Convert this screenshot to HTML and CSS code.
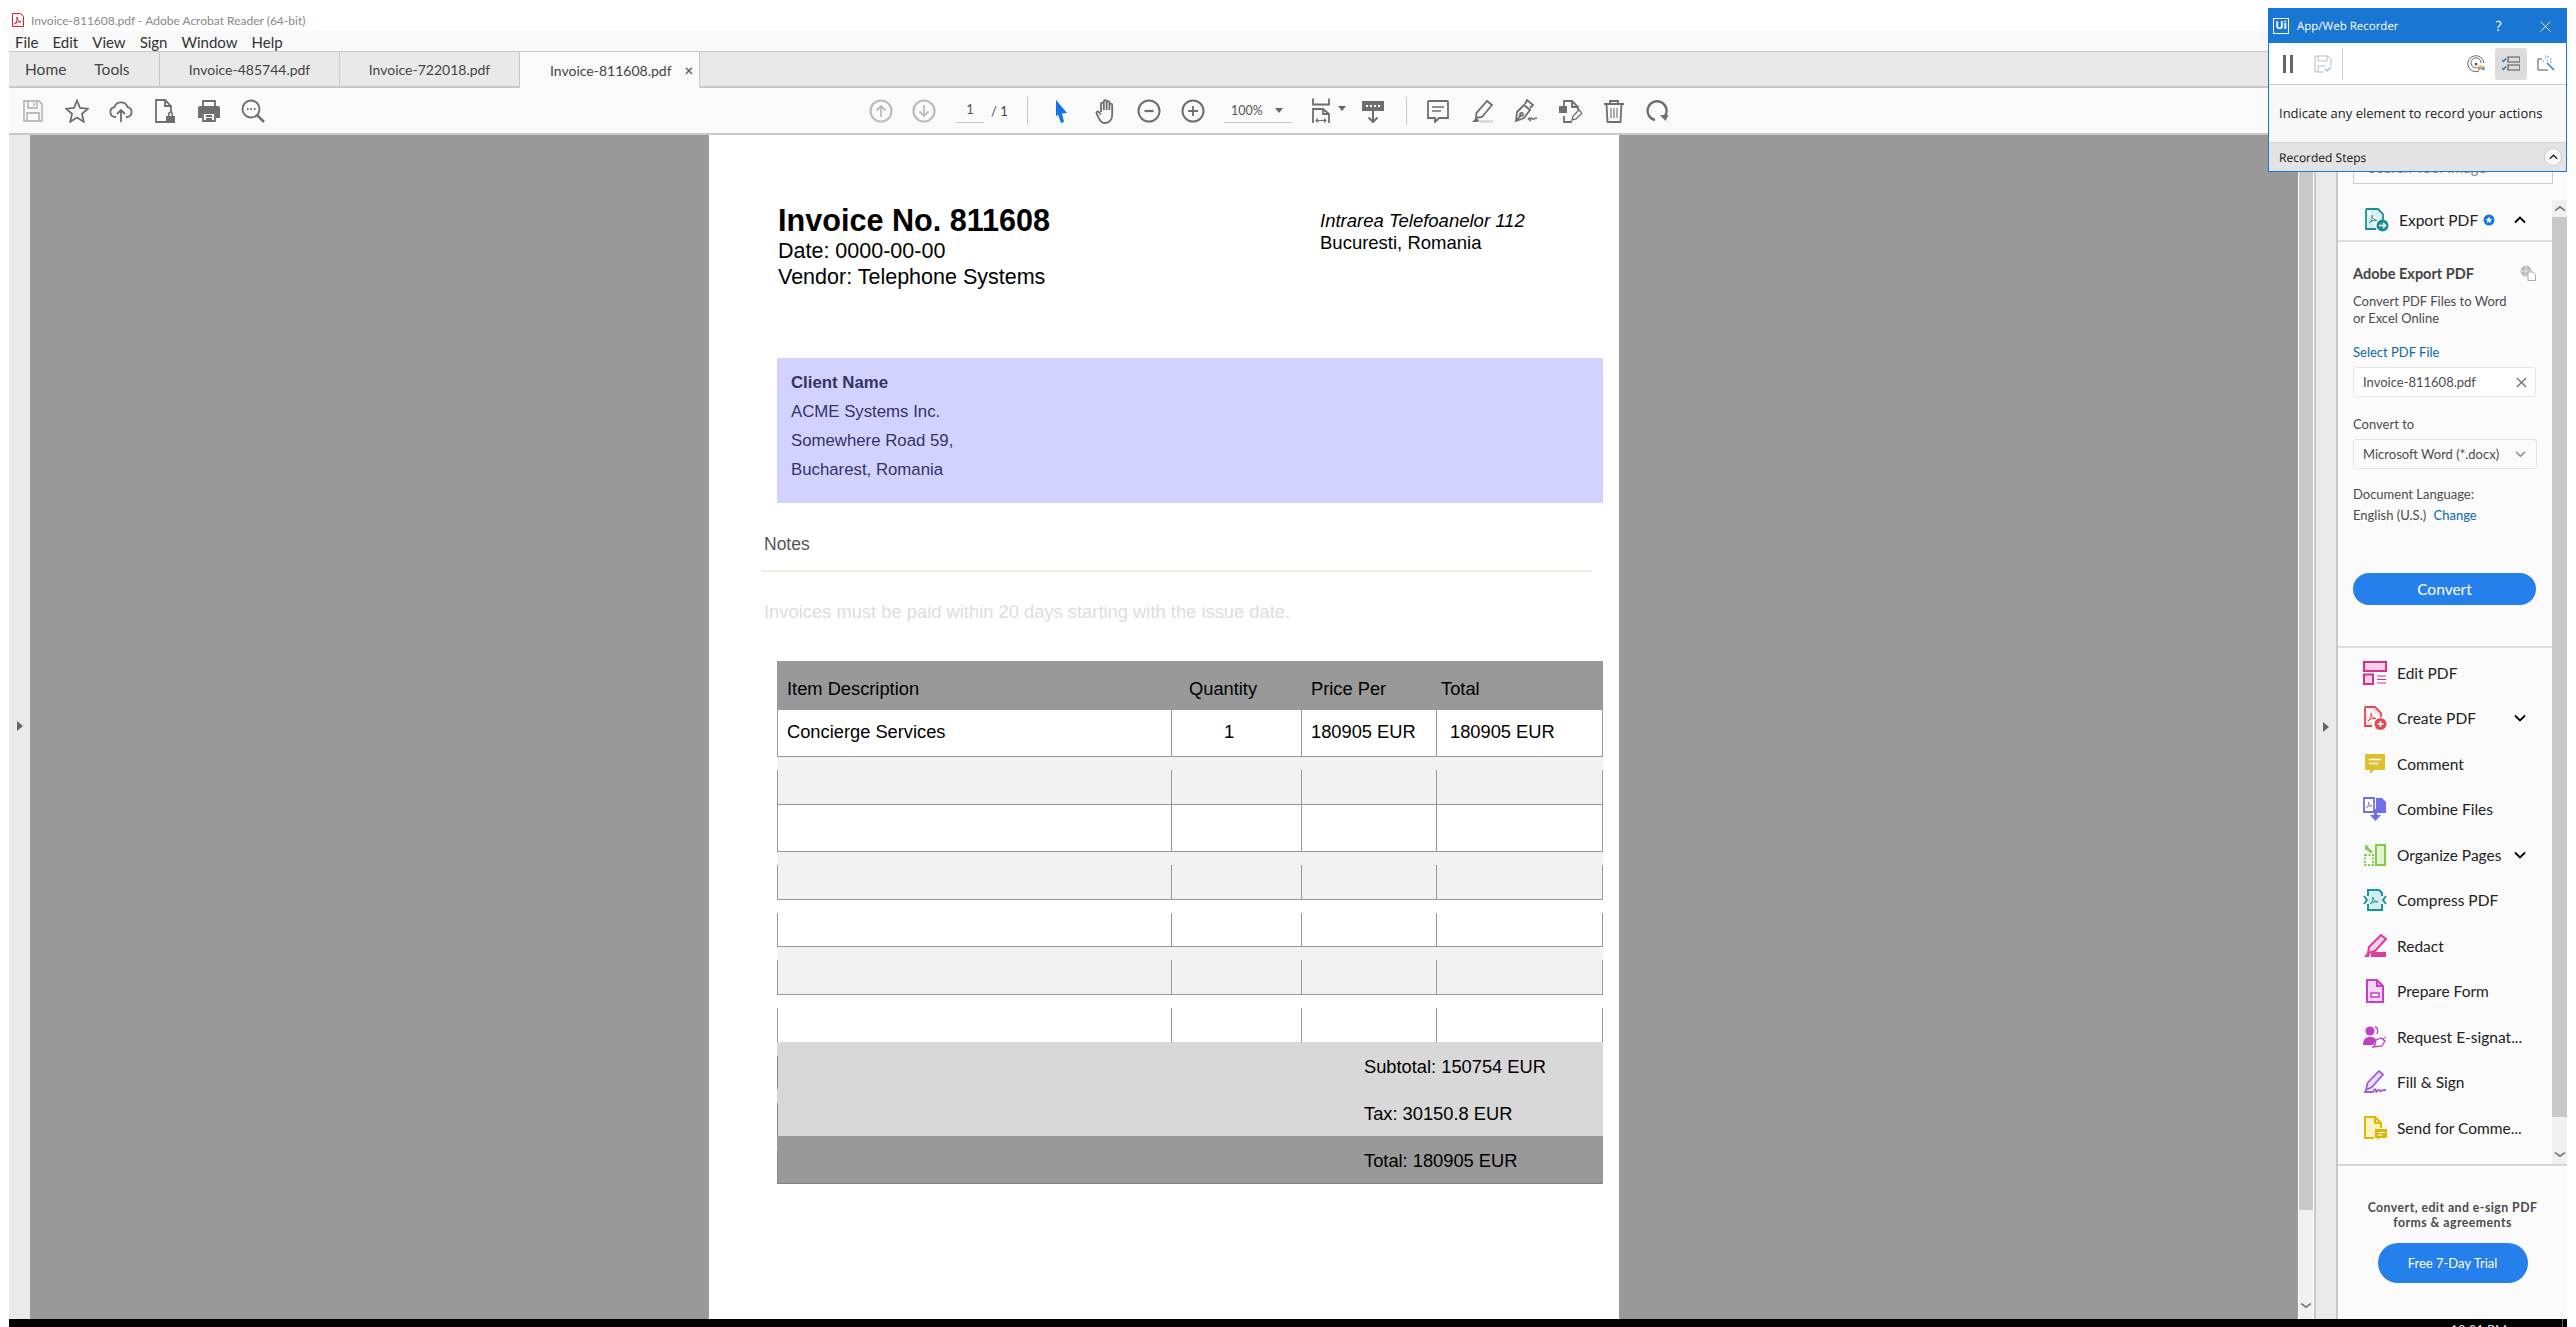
FILE: index.html
```html
<!DOCTYPE html>
<html lang="en">
<head>
  <meta charset="UTF-8" />
  <title>Invoice-811608.pdf - Adobe Acrobat Reader (64-bit)</title>
  <link rel="stylesheet" href="styles.css">
</head>
<body>

  <div class="title-bar">
    <svg class="app-icon" viewBox="0 0 12 14"><path d="M.5.5h8l3 3v10H.5z" fill="#fff" stroke="#d2232a"/><path d="M2.5 11c2-1.500 3-4.500 2.500-7 0 2.500 1.500 4.500 4 5-2.500-.5-4.500.5-6.500 2z" fill="none" stroke="#d2232a"/></svg>
    <span>Invoice-811608.pdf - Adobe Acrobat Reader (64-bit)</span>
  </div>

  <div class="app">
    <div class="menu-bar">
      <span>File</span><span>Edit</span><span>View</span><span>Sign</span><span>Window</span><span>Help</span>
    </div>

    <div class="tab-bar">
      <div class="tab-home"><span>Home</span><span>Tools</span></div>
      <div class="tab">Invoice-485744.pdf</div>
      <div class="tab">Invoice-722018.pdf</div>
      <div class="tab tab-active">Invoice-811608.pdf <b>×</b></div>
    </div>

    <div class="tool-bar">
      <div class="tb-btn"><svg class="ico ico-off" viewBox="0 0 24 24"><path d="M3 2h15l3 3v17H3z"/><path d="M7 2v7h9V2M13 4v3M6 22v-8h12v8"/></svg></div>
      <div class="tb-btn"><svg class="ico" viewBox="0 0 24 24"><path d="M12 1.500l3 7.500 8 .7-6 5.200 1.800 7.900-6.800-4.200-6.800 4.200L7 14.900l-6-5.200L9 9z"/></svg></div>
      <div class="tb-btn"><svg class="ico" viewBox="0 0 24 24"><path d="M7 18H6a5 5 0 0 1-.5-9.900 6.800 6.800 0 0 1 13 0A5 5 0 0 1 18 18h-1M12 23V11M8 15l4-4 4 4"/></svg></div>
      <div class="tb-btn"><svg class="ico" viewBox="0 0 24 24"><path d="M13 23H3V1h9l6 6v6M12 1v6h6"/><path class="solid" d="M13 17h9v7h-9zM15 17v-2a2.500 2.500 0 0 1 5 0v2h-1.500v-2a1 1 0 0 0-2 0v2z"/></svg></div>
      <div class="tb-btn"><svg class="ico" viewBox="0 0 24 24"><path d="M6 8V2h12v6"/><path class="solid" d="M3 7h18a2 2 0 0 1 2 2v10h-4v-5H5v5H1V9a2 2 0 0 1 2-2z"/><path d="M6 14h12v8H6zM9 17h6M9 20h6"/></svg></div>
      <div class="tb-btn"><svg class="ico" viewBox="0 0 24 24"><circle cx="10" cy="10" r="8.500"/><path d="M16 16l7 7" stroke-width="2.500"/><path d="M6 10h1.500M9.500 10H11M13 10h1.500" stroke-width="2"/></svg></div>

      <div class="tb-nav tb-first"><svg class="ico ico-off" viewBox="0 0 24 24"><circle cx="12" cy="12" r="10.500" stroke-width="2.200"/><path d="M12 18V7M7.500 11.500L12 7l4.500 4.500"/></svg></div>
      <div class="tb-nav"><svg class="ico ico-off" viewBox="0 0 24 24"><circle cx="12" cy="12" r="10.500" stroke-width="2.200"/><path d="M12 6v11M7.500 12.500L12 17l4.500-4.500"/></svg></div>
      <div class="page-box">1</div>
      <div class="page-of">/ 1</div>
      <div class="tb-sep"></div>

      <div class="tb-btn tb-cursor"><svg class="ico ico-blue" viewBox="0 0 24 24"><path d="M7 1l11 13-5 .5L15 23l-3 1-3-8.500-2 2z"/></svg></div>
      <div class="tb-btn"><svg class="ico ico-big" viewBox="0 0 24 26"><path d="M8 14V6a1.400 1.400 0 0 1 2.800 0v6M10.800 12V3.500a1.400 1.400 0 0 1 2.800 0V12M13.600 12V4.500a1.400 1.400 0 0 1 2.800 0V12M16.400 12V7a1.400 1.400 0 0 1 2.800 0v10c0 4.500-2.800 8-7 8-3.200 0-4.800-1.500-6-4.200L3.600 15.500c-.7-1.500 1-2.700 2.200-1.500L8 16.500"/></svg></div>
      <div class="tb-btn"><svg class="ico" viewBox="0 0 24 24"><circle cx="12" cy="12" r="10.500" stroke-width="2"/><path d="M7.500 12h9" stroke-width="2.200"/></svg></div>
      <div class="tb-btn"><svg class="ico" viewBox="0 0 24 24"><circle cx="12" cy="12" r="10.500" stroke-width="2"/><path d="M7 12h10M12 7v10" stroke-width="1.800"/></svg></div>
      <div class="zoom-box"><span>100%</span><i class="caret"></i></div>

      <div class="tb-btn tb-fit"><svg class="ico ico-big" viewBox="0 0 24 26"><path d="M2 .5v6h16v-6"/><path d="M2 25V11h10l6 5v9M12 11v5h6"/><path d="M5 22.500h10M7 20.500l-2 2 2 2M13 20.500l2 2-2 2" stroke-width="1.100"/></svg></div>
      <i class="caret caret-fit"></i>
      <div class="tb-btn tb-measure"><svg class="ico" viewBox="0 0 24 24"><path class="solid" d="M1 2h22v10H1z"/><path d="M5 7h2M9 7h2M13 7h2M17 7h2" stroke="#fff" stroke-width="2"/><path d="M12 12v11M7.500 18.500L12 23l4.500-4.500" stroke-width="2"/></svg></div>
      <div class="tb-sep tb-sep2"></div>

      <div class="tb-btn tb-comment"><svg class="ico" viewBox="0 0 24 24"><path d="M3 2h18a1 1 0 0 1 1 1v16h-9l-4 4v-4H2V3a1 1 0 0 1 1-1z"/><path d="M6 8h12M6 12h9" stroke-width="1.300"/></svg></div>
      <div class="tb-btn"><svg class="ico" viewBox="0 0 24 24"><path d="M17 2l5 4-10 12-6 1 .500-5z" fill="#fafafa"/><path class="solid" d="M2 23l4-4 3 2-1 2z"/><path d="M9 22.500h14" stroke="#dcdcdc" stroke-width="3"/></svg></div>
      <div class="tb-btn"><svg class="ico" viewBox="0 0 24 24"><path d="M2 22l1-9 7-7 6 5-6 8zM2 22l5-6M11 5l2-4 6 5-3 3"/><circle cx="7.500" cy="15.500" r="1.500"/><path d="M14 21c1-3 2-3 2 0s1-3 2-2 1 2 2 1 2-1 3-1" stroke-width="1.300"/></svg></div>
      <div class="tb-btn"><svg class="ico" viewBox="0 0 24 24"><path class="solid" d="M1 7h8v7H1z"/><path d="M6 7V2h8l6 6v3M14 2v6h6M6 17v6h8"/><path d="M14 21l1-4 6-6 3 3-6 6z" stroke-width="1.300"/></svg></div>
      <div class="tb-btn"><svg class="ico" viewBox="0 0 24 24"><path d="M2 5h20M8 5V2h8v3M4.500 5l1 18h13l1-18"/><path d="M9 9v10M12 9v10M15 9v10" stroke-width="1.100"/></svg></div>
      <div class="tb-btn"><svg class="ico" viewBox="0 0 24 24"><path d="M9 21A9.500 9.500 0 1 1 19 17" stroke-width="2.400"/><path class="solid" d="M14 16h8.500l-3 6z"/></svg></div>
    </div>

    <div class="main">
      <div class="rail rail-left"><i class="rail-arrow"></i></div>

      <div class="viewer">
        <div class="page">
          <div class="inv-head">
            <div class="inv-title">
              <h1>Invoice No. 811608</h1>
              <p>Date: 0000-00-00</p>
              <p>Vendor: Telephone Systems</p>
            </div>
            <div class="inv-addr">
              <p><em>Intrarea Telefoanelor 112</em></p>
              <p>Bucuresti, Romania</p>
            </div>
          </div>

          <div class="client">
            <p><strong>Client Name</strong></p>
            <p>ACME Systems Inc.</p>
            <p>Somewhere Road 59,</p>
            <p>Bucharest, Romania</p>
          </div>

          <div class="notes-head">Notes</div>
          <div class="notes-text">Invoices must be paid within 20 days starting with the issue date.</div>

          <div class="table">
            <div class="row row-head">
              <div class="th th-item">Item Description</div>
              <div class="th th-qty">Quantity</div>
              <div class="th th-price">Price Per</div>
              <div class="th th-total">Total</div>
            </div>
            <div class="row row-w">
              <div class="cell c-item">Concierge Services</div>
              <div class="cell c-qty">1</div>
              <div class="cell c-price">180905 EUR</div>
              <div class="cell c-total">180905 EUR</div>
            </div>
            <div class="row row-g row-gap"><div class="cell"></div><div class="cell"></div><div class="cell"></div><div class="cell"></div></div>
            <div class="row row-w"><div class="cell"></div><div class="cell"></div><div class="cell"></div><div class="cell"></div></div>
            <div class="row row-g row-gap"><div class="cell"></div><div class="cell"></div><div class="cell"></div><div class="cell"></div></div>
            <div class="row row-w row-gap"><div class="cell"></div><div class="cell"></div><div class="cell"></div><div class="cell"></div></div>
            <div class="row row-g row-gap"><div class="cell"></div><div class="cell"></div><div class="cell"></div><div class="cell"></div></div>
            <div class="row row-w row-gap row-last"><div class="cell"></div><div class="cell"></div><div class="cell"></div><div class="cell"></div></div>

            <div class="sum-row"><div class="sum-cell">Subtotal: 150754 EUR</div></div>
            <div class="sum-row"><div class="sum-cell">Tax: 30150.8 EUR</div></div>
            <div class="sum-row sum-total"><div class="sum-cell">Total: 180905 EUR</div></div>
          </div>
        </div>
      </div>

      <div class="viewer-gap"></div>
      <div class="vscroll"><div class="vscroll-thumb"></div><i class="scroll-down"></i></div>

      <div class="rail rail-right"><i class="rail-arrow"></i></div>

      <div class="panel">
        <div class="panel-search"><div class="search-box">Search Tool Image</div></div>

        <div class="panel-scroll">
          <div class="panel-list">
            <div class="export-head">
              <svg class="pico" viewBox="0 0 24 24"><path d="M1 1h12l5 5v9M1 1v20h10" fill="#d6eeee" stroke="#1a8f93" stroke-width="1.800"/><path d="M4 15c2.500-2 3.500-5 3-8 0 3 2 5 5 5.500-3-.5-6 .5-8 2.500z" fill="none" stroke="#1a8f93"/><circle cx="17.500" cy="17.500" r="6" fill="#1a8f93"/><path d="M14 17.500h6M18 15l2.500 2.500L18 20" fill="none" stroke="#fff" stroke-width="1.500"/></svg>
              <span>Export PDF</span>
              <svg class="badge" viewBox="0 0 12 12"><circle cx="6" cy="6" r="5.500" fill="#1473e6"/><path d="M6 2.500l1 2.300 2.500.2-1.900 1.600.6 2.400L6 7.700 3.800 9l.6-2.400L2.500 5l2.500-.2z" fill="#fff"/></svg>
              <svg class="chev chev-up" viewBox="0 0 12 8"><path d="M1 6.500l5-5 5 5" fill="none" stroke="#000" stroke-width="1.800"/></svg>
            </div>

            <div class="export-box">
              <div class="export-title">
                <span>Adobe Export PDF</span>
                <svg class="globe" viewBox="0 0 16 16"><circle cx="6" cy="6" r="5.500" fill="#bbb"/><path d="M1 6h10M6 .500v11" stroke="#fff" stroke-width=".7"/><path d="M8 7h5l2.500 2.500V15.500H8z" fill="#fff" stroke="#aaa"/></svg>
              </div>
              <p class="export-desc">Convert PDF Files to Word<br>or Excel Online</p>
              <p class="export-link">Select PDF File</p>
              <div class="field"><span>Invoice-811608.pdf</span>
                <svg class="field-x" viewBox="0 0 12 12"><path d="M1 1l10 10M11 1L1 11" stroke="#777" stroke-width="1.600"/></svg>
              </div>
              <p class="export-label">Convert to</p>
              <div class="field field-select"><span>Microsoft Word (*.docx)</span>
                <svg class="field-chev" viewBox="0 0 12 8"><path d="M1 1.500l5 5 5-5" fill="none" stroke="#888" stroke-width="1.500"/></svg>
              </div>
              <p class="export-lang">Document Language:</p>
              <p class="export-lang2">English (U.S.) <a>Change</a></p>
              <div class="convert-btn">Convert</div>
            </div>

            <div class="tool-item">
              <svg class="pico" viewBox="0 0 24 24"><path d="M1 1h22v9H1z" fill="#f8d1e6" stroke="#d6318f" stroke-width="2"/><path d="M1 13.500h9V23H1z" fill="#f8d1e6" stroke="#d6318f" stroke-width="2"/><path d="M14 15h9M14 18.500h9M14 22h9" stroke="#d6318f"/></svg>
              <span>Edit PDF</span>
            </div>
            <div class="tool-item tool-more">
              <svg class="pico" viewBox="0 0 24 24"><path d="M2 1h10l6 6v4M2 1v19h7" fill="#fde6e7" stroke="#e34850" stroke-width="1.800"/><path d="M5 15c2.500-2 3.500-5 3-8 0 3 2 5 5 5.500-3-.5-6 .5-8 2.500z" fill="none" stroke="#e34850"/><circle cx="17.500" cy="18" r="6" fill="#e34850"/><path d="M14.500 18h6M17.500 15v6" stroke="#fff" stroke-width="1.600"/></svg>
              <span>Create PDF</span>
              <svg class="chev" viewBox="0 0 12 8"><path d="M1 1.500l5 5 5-5" fill="none" stroke="#000" stroke-width="1.800"/></svg>
            </div>
            <div class="tool-item">
              <svg class="pico" viewBox="0 0 24 24"><path d="M2 2h20v16H11l-4 4v-4H2z" fill="#dfbf2c"/><path d="M6 7.500h12M6 11.500h9" stroke="#fff" stroke-width="1.600"/></svg>
              <span>Comment</span>
            </div>
            <div class="tool-item">
              <svg class="pico" viewBox="0 0 24 24"><path d="M1 1h10v14H1z" fill="#fff" stroke="#6f6fe8" stroke-width="1.800"/><path d="M13 1h6l4 4v11H13z" fill="#6f6fe8"/><path d="M3 11c2-1.500 3-3.500 2.500-6 0 2.500 1.500 3.500 3.500 4-2-.5-4 .5-6 2z" fill="none" stroke="#6f6fe8" stroke-width=".8"/><path d="M11 12h3v6h4l-5.500 6L7 18h4z" fill="#6f6fe8"/></svg>
              <span>Combine Files</span>
            </div>
            <div class="tool-item tool-more">
              <svg class="pico" viewBox="0 0 24 24"><path d="M13 2h9v20h-9z" fill="#e2f3d4" stroke="#82cc48" stroke-width="2"/><path d="M2 12h8v10H2z" fill="none" stroke="#82cc48" stroke-width="2" stroke-dasharray="2 1.500"/><path d="M2 2l4 1-1 1.500 5 4-2 2-5-4L2 7z" fill="#82cc48"/></svg>
              <span>Organize Pages</span>
              <svg class="chev" viewBox="0 0 12 8"><path d="M1 1.500l5 5 5-5" fill="none" stroke="#000" stroke-width="1.800"/></svg>
            </div>
            <div class="tool-item">
              <svg class="pico" viewBox="0 0 24 24"><path d="M5 2h14v20H5z" fill="#d5eeee"/><path d="M5 8V2h11l3 3v3M19 16v6H5v-6" fill="none" stroke="#1a979c" stroke-width="2"/><path d="M7 16c2-2 3.500-4 3-7 0 3 2 4.500 5 5-3-.5-5.500 0-8 2z" fill="none" stroke="#1a979c"/><path d="M1 8l3 4-3 4M23 8l-3 4 3 4" fill="none" stroke="#1a979c" stroke-width="2"/></svg>
              <span>Compress PDF</span>
            </div>
            <div class="tool-item">
              <svg class="pico" viewBox="0 0 24 24"><path d="M18 1l5 4-11 12-7 2 1-6z" fill="#f9d4e8" stroke="#de3d9a" stroke-width="2"/><path d="M1 23l3-4 3 1-1 3zM8 18h15v5H8z" fill="#de3d9a"/></svg>
              <span>Redact</span>
            </div>
            <div class="tool-item">
              <svg class="pico" viewBox="0 0 24 24"><path d="M4 1h10l6 6v16H4z" fill="#f4d7f4" stroke="#c93bc9" stroke-width="2"/><path d="M14 1v6h6" fill="none" stroke="#c93bc9" stroke-width="2"/><path d="M8 14h8v4H8z" fill="#fff" stroke="#c93bc9" stroke-width="1.500"/></svg>
              <span>Prepare Form</span>
            </div>
            <div class="tool-item">
              <svg class="pico" viewBox="0 0 24 24"><circle cx="7" cy="6" r="4.500" fill="#c13dc7"/><path d="M0 20c0-6 3-8 7-8s5 1 6 3l-3 5z" fill="#c13dc7"/><path d="M12 2c3 0 3 4 2 7" fill="none" stroke="#c13dc7" stroke-width="1.300"/><path d="M11 22l2-7 5-2 4 3-3 5z" fill="#fff" stroke="#c13dc7" stroke-width="1.300"/><path d="M23 12l-3 2M9 23l4-4" stroke="#c13dc7"/></svg>
              <span>Request E-signat...</span>
            </div>
            <div class="tool-item">
              <svg class="pico" viewBox="0 0 24 24"><path d="M16 1l4 3.500L9 17l-6 3 1.500-7z" fill="#eadcf8" stroke="#a25fd8" stroke-width="1.800"/><path d="M1 22h9c1-3 3-4 3-1s2-2 3-1 1 2 2 1 3-1 5-1" fill="none" stroke="#a25fd8" stroke-width="1.800"/></svg>
              <span>Fill &amp; Sign</span>
            </div>
            <div class="tool-item">
              <svg class="pico" viewBox="0 0 24 24"><path d="M2 1h10l6 6v15H2z" fill="#fbf3c4"/><path d="M18 12V7l-6-6H2v21h9M12 1v6h6" fill="none" stroke="#dfb700" stroke-width="2"/><path d="M12 13h12v9h-7l-2.500 2v-2H12z" fill="#dfb700"/><path d="M14.500 16.500h7M14.500 19h5" stroke="#fff"/></svg>
              <span>Send for Comme...</span>
            </div>
          </div>

          <div class="panel-scrollbar"><i class="scroll-up"></i><div class="panel-thumb"></div><i class="scroll-down"></i></div>
        </div>

        <div class="panel-promo">
          <p>Convert, edit and e-sign PDF<br>forms &amp; agreements</p>
          <div class="trial-btn">Free 7-Day Trial</div>
        </div>
      </div>
    </div>

    <div class="task-bar"><span>10:01 PM</span></div>
  </div>

  <!-- floating recorder window -->
  <div class="recorder">
    <div class="rec-head">
      <span class="rec-logo">Ui</span>
      <span class="rec-title">App/Web Recorder</span>
      <span class="rec-help">?</span>
      <svg class="rec-close" viewBox="0 0 12 12"><path d="M.5.500l11 11M11.500.500l-11 11" stroke="#fff"/></svg>
    </div>
    <div class="rec-tools">
      <i class="rec-pause"></i>
      <svg class="rec-ico rec-save" viewBox="0 0 18 18"><path d="M1 1h13l3 3v7M1 1v16h9M4 1v5h9V1M4 17v-6h7" fill="none" stroke="#bbb"/><path d="M11 14l2 2 4-4" fill="none" stroke="#8cc0ee" stroke-width="1.200"/></svg>
      <i class="rec-sep"></i>
      <svg class="rec-ico rec-target" viewBox="0 0 18 18"><path d="M12 16A8 8 0 1 1 16.800 8" fill="none" stroke="#666"/><path d="M10.500 12.600A5 5 0 1 1 14 8" fill="none" stroke="#666"/><circle cx="9" cy="9" r="1.500" fill="#666"/><path d="M11 12l3-1.500v3.500L11 15.500z" fill="#e8743b"/><path d="M14 10.500l3.500 1.500v3.500L14 14z" fill="#2c8ce0"/><path d="M11 12l3-1.500 3.500 1.500-3 1.500z" fill="#f2c037"/></svg>
      <div class="rec-active">
        <svg class="rec-ico" viewBox="0 0 18 18"><path d="M6 2h12v5H6zM6 10h12v5H6z" fill="none" stroke="#555" stroke-width="1.200"/><path d="M0 5l1.500 1.500L4 3.500M0 13l1.500 1.500L4 11.500" fill="none" stroke="#1976d2" stroke-width="1.200"/></svg>
      </div>
      <svg class="rec-ico rec-wand" viewBox="0 0 18 18"><path d="M5 4H1v11h10" fill="none" stroke="#555"/><path d="M10 8l7 7" stroke="#2c7fd6" stroke-width="1.500"/><path d="M8 3h1M11 1v2M13 4h2M10 6h1M6 6h1M13 7h2M8 1h1" stroke="#2c7fd6" stroke-dasharray="1 .5"/></svg>
    </div>
    <div class="rec-body">Indicate any element to record your actions</div>
    <div class="rec-steps">
      <span>Recorded Steps</span>
      <div class="rec-circle"><svg viewBox="0 0 10 6"><path d="M1 5l4-4 4 4" fill="none" stroke="#222" stroke-width="1.500"/></svg></div>
    </div>
  </div>

</body>
</html>
```

FILE: styles.css
```css
* {
  box-sizing: border-box;
}

html, body {
  margin: 0;
  height: 100%;
}

body {
  position: relative;
  width: 2576px;
  height: 1327px;
  overflow: hidden;
  background-color: #fff;
  font-family: Lato, "Open Sans", sans-serif;
  color: #222;
}

p, h1 {
  margin: 0;
}

.title-bar {
  height: 31px;
  display: flex;
  align-items: center;
  padding: 9px 0 0 12px;
  font-size: 12px;
  color: #888;
}

.app-icon {
  width: 12px;
  height: 14px;
  margin-right: 7px;
}

.app {
  margin-left: 9px;
  width: 2558px;
  height: 1296px;
  display: flex;
  flex-direction: column;
}

.menu-bar {
  height: 20px;
  flex: none;
  display: flex;
  gap: 14px;
  padding: 0 0 0 6px;
  font-size: 15px;
  line-height: 22px;
  background-color: #f9f9f9;
  color: #333;
}

.menu-bar span {
  display: block;
}

.tab-bar {
  height: 37px;
  flex: none;
  display: flex;
  background-color: #e9e9e9;
  border-top: 1px solid #c8c8c8;
  border-bottom: 2px solid #c8c8c8;
  font-size: 14px;
  color: #444;
  white-space: nowrap;
}

.tab-home {
  width: 151px;
  display: flex;
  gap: 28px;
  align-items: center;
  padding-left: 16px;
  border-right: 1px solid #c8c8c8;
  font-size: 15.500px;
}

.tab {
  width: 180px;
  display: flex;
  align-items: center;
  justify-content: center;
  border-right: 1px solid #c8c8c8;
}

.tab-active {
  justify-content: flex-start;
  padding-left: 30px;
  height: 36px;
  background-color: #fafafa;
}

.tab-active b {
  margin-left: 13px;
  color: #666;
  font-size: 15px;
}

.tool-bar {
  height: 47px;
  flex: none;
  display: flex;
  align-items: center;
  padding-left: 2px;
  background-color: #fafafa;
  border-bottom: 2px solid #c8c8c8;
}

.tb-btn,
.tb-nav {
  width: 44px;
  height: 44px;
  flex: none;
  display: flex;
  align-items: center;
  justify-content: center;
}

.tb-nav {
  width: 43px;
}

.tb-first {
  margin-left: 584px;
}

.ico {
  width: 24px;
  height: 24px;
  fill: none;
  stroke: #6e6e6e;
  stroke-width: 1.800;
}

.ico-big {
  height: 26px;
}

.ico .solid {
  fill: #6e6e6e;
  stroke: none;
}

.ico-off {
  stroke: #bcbcbc;
}

.ico-blue {
  fill: #1473e6;
  stroke: none;
}

.page-box {
  width: 28px;
  height: 25px;
  margin-left: 11px;
  border-bottom: 1px solid #c8c8c8;
  text-align: center;
  font-size: 13px;
  line-height: 22px;
  color: #555;
}

.page-of {
  margin-left: 7px;
  width: 16px;
  font-size: 13px;
  color: #444;
  white-space: nowrap;
}

.tb-sep {
  width: 1px;
  height: 28px;
  margin-left: 20px;
  background-color: #c8c8c8;
}

.tb-cursor {
  margin-left: 11px;
}

.zoom-box {
  width: 68px;
  height: 25px;
  margin-left: 9px;
  padding-left: 7px;
  display: flex;
  align-items: center;
  gap: 12px;
  border-bottom: 1px solid #c8c8c8;
  font-size: 12.500px;
  color: #555;
}

.caret {
  display: block;
  width: 0;
  height: 0;
  border-left: 4px solid transparent;
  border-right: 4px solid transparent;
  border-top: 5px solid #666;
}

.tb-fit {
  margin-left: 9px;
}

.caret-fit {
  margin-left: -7px;
  margin-top: -4px;
}

.tb-measure {
  margin-left: 5px;
}

.tb-sep2 {
  margin-left: 11px;
}

.tb-comment {
  margin-left: 9px;
}

.main {
  height: 1184px;
  flex: none;
  display: flex;
}

.rail {
  flex: none;
  display: flex;
  align-items: center;
  justify-content: center;
  background-color: #eaeaea;
}

.rail-left {
  width: 21px;
  padding-bottom: 3px;
}

.rail-right {
  width: 24px;
  border-left: 2px solid #c8c8c8;
  border-right: 2px solid #c8c8c8;
}

.rail-arrow {
  display: block;
  width: 0;
  height: 0;
  border-top: 5px solid transparent;
  border-bottom: 5px solid transparent;
  border-left: 6px solid #666;
}

.viewer {
  width: 2268px;
  flex: none;
  display: flex;
  justify-content: center;
  background-color: #999;
}

.viewer-gap {
  width: 1px;
  flex: none;
  background-color: #fff;
}

.page {
  width: 910px;
  height: 100%;
  background-color: #fff;
  font-family: "Liberation Sans", Arial, sans-serif;
  color: #000;
  padding: 0 15px 0 68px;
}

.inv-head {
  display: flex;
  padding: 68px 0 0 1px;
  height: 223px;
}

.inv-title {
  width: 542px;
}

.inv-title h1 {
  font-size: 30.600px;
  line-height: 35px;
  white-space: nowrap;
}

.inv-title p {
  font-size: 21.500px;
  line-height: 26px;
}

.inv-addr {
  padding-top: 7px;
  font-size: 18.500px;
  line-height: 22px;
}

.client {
  width: 826px;
  height: 145px;
  padding: 10px 0 0 14px;
  background-color: #d2d2ff;
  color: #333366;
  font-size: 16.800px;
  line-height: 29px;
}

.notes-head {
  width: 831px;
  margin: 30px 0 0 -16px;
  padding: 0 0 15px 3px;
  border-bottom: 2px solid #eeebe0;
  font-size: 17.500px;
  line-height: 22px;
  color: #555;
}

.notes-text {
  margin: 29px 0 0 -13px;
  font-size: 18.350px;
  line-height: 22px;
  color: #ddd;
}

.table {
  width: 826px;
  margin-top: 38px;
  font-size: 18.300px;
  line-height: 22px;
}

.row {
  display: grid;
  grid-template-columns: 394px 130px 135px 167px;
  height: 47px;
  border-bottom: 1px solid #999;
}

.row-head {
  height: 49px;
  background-color: #999;
  border-bottom: 0;
}

.th {
  padding-top: 17px;
}

.th-item {
  padding-left: 10px;
}

.th-qty {
  padding-left: 18px;
}

.th-price {
  padding-left: 10px;
}

.th-total {
  padding-left: 5px;
}

.row-g {
  height: 48px;
  background-color: #f2f2f2;
}

.row-last {
  border-bottom: 0;
}

.cell {
  border-left: 1px solid #999;
  padding-top: 11px;
}

.cell:last-child {
  border-right: 1px solid #999;
}

.row-gap .cell {
  margin-top: 13px;
}

.c-item {
  padding-left: 9px;
}

.c-qty {
  padding-left: 52px;
}

.c-price {
  padding-left: 9px;
}

.c-total {
  padding-left: 13px;
}

.sum-row {
  height: 47px;
  padding-top: 14px;
  background-color: #d8d8d8;
}

.sum-cell {
  height: 33px;
  padding-left: 586px;
  border-left: 1px solid #888;
}

.sum-total {
  height: 48px;
  background-color: #999;
  border-bottom: 1px solid #808080;
}

.vscroll {
  width: 15px;
  flex: none;
  display: flex;
  flex-direction: column;
  background-color: #f0f0f0;
  border-right: 1px solid #fff;
}

.vscroll-thumb {
  height: 1075px;
  background-color: #c8c8c8;
}

.scroll-down,
.scroll-up {
  display: block;
  width: 8px;
  height: 8px;
  margin: 90px auto 0;
  border-right: 2px solid #777;
  border-bottom: 2px solid #777;
  transform: scaleY(.7) rotate(45deg);
}

.panel {
  width: 229px;
  flex: none;
  display: flex;
  flex-direction: column;
  background-color: #fbfbfb;
}

.panel-search {
  height: 65px;
  padding: 0 14px 0 15px;
}

.search-box {
  height: 49px;
  padding: 22px 0 0 14px;
  border: 1px solid #ccc;
  font-size: 15px;
  color: #888;
}

.panel-scroll {
  height: 964px;
  display: flex;
}

.panel-list {
  width: 214px;
  flex: none;
}

.panel-scrollbar {
  width: 15px;
  flex: none;
  background-color: #f0f0f0;
  display: flex;
  flex-direction: column;
}

.panel-thumb {
  height: 900px;
  background-color: #c8c8c8;
}

.panel-scrollbar .scroll-up {
  margin: 6px auto 3px;
  transform: scaleY(.7) rotate(225deg);
}

.panel-scrollbar .scroll-down {
  margin: 32px auto 0;
}

.export-head {
  height: 40px;
  margin-left: 15px;
  width: 183px;
  padding-left: 12px;
  display: flex;
  align-items: center;
  font-size: 15.500px;
  color: #222;
}

.pico {
  width: 24px;
  height: 24px;
  flex: none;
  margin-right: 10px;
}

.badge {
  width: 12px;
  height: 12px;
  margin-left: 5px;
}

.chev {
  width: 12px;
  height: 8px;
  margin-left: auto;
  margin-right: 10px;
}

.export-box {
  height: 408px;
  padding: 21px 0 0 15px;
  border-top: 2px solid #dedede;
  border-bottom: 2px solid #dedede;
  font-size: 13px;
  color: #4b4b4b;
}

.export-title {
  display: flex;
  width: 183px;
  justify-content: space-between;
  align-items: center;
  height: 20px;
  font-size: 14.500px;
  font-weight: 700;
  color: #444;
}

.globe {
  width: 16px;
  height: 16px;
}

.export-desc {
  margin-top: 10px;
  line-height: 17px;
}

.export-link {
  margin-top: 16px;
  line-height: 18px;
  color: #0d66a8;
}

.export-label {
  margin-top: 18px;
  line-height: 18px;
}

.field {
  width: 183px;
  height: 30px;
  margin-top: 6px;
  padding: 0 8px 0 9px;
  display: flex;
  align-items: center;
  justify-content: space-between;
  border: 1px solid #e4e4e4;
  border-radius: 3px;
  background-color: #fff;
}

.field-select {
  width: 184px;
  background-color: #fbfbfb;
}

.field-x {
  width: 11px;
  height: 11px;
}

.field-chev {
  width: 11px;
  height: 8px;
  margin-right: 2px;
}

.export-lang {
  margin-top: 16px;
  line-height: 18px;
}

.export-lang2 {
  margin-top: 3px;
  line-height: 18px;
}

.export-lang2 a {
  margin-left: 4px;
  color: #0d66a8;
}

.convert-btn {
  width: 183px;
  height: 32px;
  margin-top: 49px;
  border-radius: 16px;
  background-color: #2680eb;
  color: #fff;
  font-size: 15.500px;
  line-height: 32px;
  text-align: center;
}

.tool-item {
  height: 45.500px;
  width: 183px;
  margin-left: 15px;
  padding-left: 10px;
  display: flex;
  align-items: center;
  font-size: 15.500px;
  color: #222;
}

.export-box + .tool-item {
  margin-top: 2px;
}

.tool-more {
  background-color: #fafafa;
}

.panel-promo {
  height: 155px;
  padding-top: 34px;
  border-top: 2px solid #d6d6d6;
  text-align: center;
}

.panel-promo p {
  font-size: 12.300px;
  font-weight: 700;
  line-height: 15px;
  letter-spacing: .45px;
  color: #4b4b4b;
}

.trial-btn {
  width: 150px;
  height: 40px;
  margin: 13px auto 0;
  border-radius: 20px;
  background-color: #2680eb;
  color: #fff;
  font-size: 13px;
  line-height: 40px;
}

.task-bar {
  height: 8px;
  flex: none;
  overflow: hidden;
  background-color: #000;
  box-shadow: inset -4px 0 0 #000, inset -5px 0 0 #666;
  color: #ddd;
  font-size: 13px;
  text-align: right;
  padding-right: 60px;
  line-height: 22px;
}

.task-bar span {
  display: block;
}

/* floating recorder window */
.recorder {
  position: absolute;
  left: 2268px;
  top: 8px;
  width: 299px;
  height: 164px;
  display: flex;
  flex-direction: column;
  border: 1px solid #1976d2;
  background-color: #fff;
  font-family: "Open Sans", sans-serif;
  text-rendering: geometricPrecision;
}

.rec-head {
  height: 34px;
  flex: none;
  display: flex;
  align-items: center;
  padding-left: 4px;
  background-color: #1976d2;
  color: #fff;
  font-size: 11.500px;
}

.rec-logo {
  width: 16px;
  height: 16px;
  border: 1px solid #fff;
  font-size: 11px;
  font-weight: 700;
  line-height: 14px;
  text-align: center;
}

.rec-title {
  margin-left: 8px;
}

.rec-help {
  margin-left: 97px;
  font-size: 14px;
}

.rec-close {
  width: 11px;
  height: 11px;
  margin-left: 38px;
}

.rec-tools {
  height: 42px;
  flex: none;
  display: flex;
  align-items: center;
  padding-left: 14px;
  border-bottom: 1px solid #ccc;
}

.rec-pause {
  display: block;
  width: 10px;
  height: 18px;
  border-left: 3px solid #666;
  border-right: 3px solid #666;
}

.rec-ico {
  width: 18px;
  height: 18px;
}

.rec-save {
  margin-left: 21px;
}

.rec-sep {
  display: block;
  width: 1px;
  height: 32px;
  margin-left: 10px;
  background-color: #ccc;
}

.rec-target {
  margin-left: 124px;
}

.rec-active {
  width: 32px;
  height: 32px;
  margin-left: 10px;
  display: flex;
  align-items: center;
  justify-content: center;
  border-radius: 3px;
  background-color: #dcdcdc;
}

.rec-wand {
  margin-left: 10px;
}

.rec-body {
  height: 57px;
  flex: none;
  padding-left: 10px;
  background-color: #f8f8f8;
  font-size: 13px;
  line-height: 57px;
  color: #222;
}

.rec-steps {
  flex: 1;
  display: flex;
  align-items: center;
  justify-content: space-between;
  padding: 0 4px 0 10px;
  border-top: 1px solid #d2d2d2;
  background-color: #e3e3e3;
  font-size: 12px;
  color: #111;
}

.rec-circle {
  width: 18px;
  height: 18px;
  display: flex;
  align-items: center;
  justify-content: center;
  border: 1px solid #ccc;
  border-radius: 50%;
  background-color: #fafafa;
}

.rec-circle svg {
  width: 9px;
  height: 6px;
}
```
